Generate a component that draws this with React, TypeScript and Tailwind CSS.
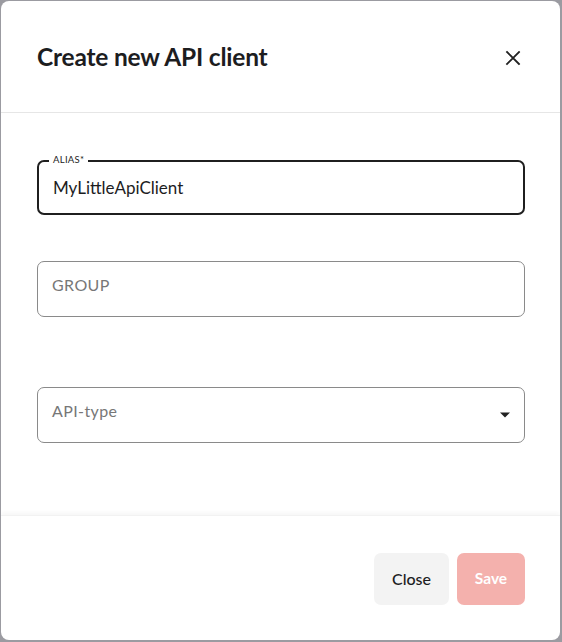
import React from "react";

export default function App() {
  const font = { fontFamily: "Lato, 'Open Sans', sans-serif" };
  return (
    <div className="w-[562px] h-[642px] bg-[#9b9ba1] pl-px pt-px pr-[2px] pb-[2px]" style={font}>
      <div className="w-full h-full bg-white rounded-[8px] flex flex-col overflow-hidden">
        <div className="h-[112px] flex items-center justify-between pl-[36px] pr-[38px] border-b border-[#e6e6e6] shrink-0">
          <h1 className="text-[24.5px] font-bold text-[#1d1d1f] tracking-[-0.2px] mt-[2px]">Create new API client</h1>
          <button className="w-[18px] h-[18px] flex items-center justify-center text-[#222] mt-[2px]">
            <svg width="16" height="16" viewBox="0 0 16 16" fill="none" stroke="currentColor" strokeWidth="1.8" strokeLinecap="square">
              <path d="M2 2L14 14M14 2L2 14" />
            </svg>
          </button>
        </div>
        <div className="flex-1 pl-[36px] pr-[35px] pt-[47px] flex flex-col">
          <div className="relative h-[55px] border-2 border-[#1f1f1f] rounded-[7px] flex items-center px-[14px]">
            <span className="absolute -top-[8px] left-[10px] bg-white px-[4px] text-[9.5px] leading-[12px] text-[#222] tracking-[0.3px]">ALIAS*</span>
            <span className="text-[17px] text-[#1d1d1f]">MyLittleApiClient</span>
          </div>
          <div className="mt-[46px] h-[56px] border border-[#8a8a8a] rounded-[7px] flex items-center px-[14px]">
            <span className="text-[16px] text-[#777] tracking-[0.4px] -mt-[8px]">GROUP</span>
          </div>
          <div className="mt-[70px] h-[56px] border border-[#8a8a8a] rounded-[7px] flex items-center justify-between pl-[14px] pr-[14px]">
            <span className="text-[16px] text-[#777] tracking-[0.4px] -mt-[8px]">API-type</span>
            <svg width="10" height="6" viewBox="0 0 10 5" className="text-[#222]">
              <path d="M0 0L10 0L5 5Z" fill="currentColor" />
            </svg>
          </div>
        </div>
        <div className="h-[125px] shrink-0 shadow-[0_-3px_4px_rgba(0,0,0,0.03)] border-t border-[#f2f2f2] flex items-start justify-end gap-[8px] pr-[35px] pt-[37px]">
          <button className="h-[52px] w-[75px] rounded-[7px] bg-[#f3f3f3] text-[16px] text-[#1d1d1f] font-medium">Close</button>
          <button className="h-[52px] w-[68px] rounded-[7px] bg-[#f4b1ad] text-[15.5px] text-white font-bold">Save</button>
        </div>
      </div>
    </div>
  );
}
